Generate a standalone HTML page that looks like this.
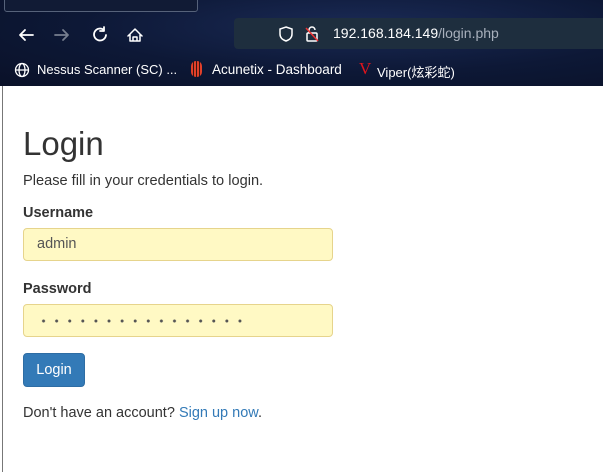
<!DOCTYPE html>
<html><head><style>
body{margin:0;width:603px;height:472px;overflow:hidden;background:#fff;font-family:"Liberation Sans","Noto Sans CJK SC",sans-serif;position:relative}
.top{position:absolute;left:0;top:0;width:603px;height:86px;background:radial-gradient(ellipse at 60% 30%,#1a2a55 0%,#0d1836 55%,#0a1128 100%)}
.tab{position:absolute;left:4px;top:-4px;width:192px;height:14px;border:1px solid #56627a;border-radius:3px;background:#111b35}
.url{position:absolute;left:234px;top:18px;width:380px;height:31px;background:#1e2e3e;border-radius:4px}
.t{position:absolute;color:#fff;white-space:nowrap}
.lb{position:absolute;left:2px;top:86px;width:1px;height:386px;background:#777}
.c{position:absolute;left:23px;color:#333;white-space:nowrap}
.in{position:absolute;left:23px;width:310px;height:33px;background:#fff9c4;border:1px solid #e6d48c;border-radius:4px;box-sizing:border-box}
</style></head><body>
<div class="top">
<div class="tab"></div>
<svg style="position:absolute;left:0;top:22px" width="160" height="26" fill="none" stroke-width="1.8" stroke-linecap="round" stroke-linejoin="round">
<path d="M20 13h13M20 13l5-5M20 13l5 5" stroke="#fff"/>
<path d="M55 13h13M68 13l-5-5M68 13l-5 5" stroke="#777f8f"/>
<path d="M104 8a6 6 0 1 0 2 5M104 5v4h-4" stroke="#fff"/>
<path d="M128 14l7-7 7 7M130 12v7h10v-7M133 19v-4h4v4" stroke="#fff" stroke-width="1.5"/>
</svg>
<div class="url"></div>
<svg style="position:absolute;left:276px;top:24px" width="50" height="20" fill="none" stroke="#fff" stroke-width="1.5">
<path d="M10 3l6 2v5c0 4-3 6-6 7-3-1-6-3-6-7V5z"/>
<rect x="31" y="9" width="10" height="8" rx="1"/><path d="M33 9V6a3 3 0 0 1 6 0"/><path d="M30 4l12 13" stroke="#e33"/>
</svg>
<div class="t" style="left:333px;top:25px;font-size:14px">192.168.184.149<span style="color:#a8b0bc">/login.php</span></div>
<svg style="position:absolute;left:14px;top:62px" width="16" height="16" fill="none" stroke="#fff" stroke-width="1.3"><circle cx="8" cy="8" r="6.5"/><ellipse cx="8" cy="8" rx="3" ry="6.5"/><path d="M1.5 8h13"/></svg>
<div class="t" style="left:37px;top:62px;font-size:13px">Nessus Scanner (SC) ...</div>
<div style="position:absolute;left:191px;top:61px;width:11px;height:16px;border-radius:5px;background:repeating-linear-gradient(90deg,#e2402a 0 2px,#3a1510 2px 3px)"></div>
<div class="t" style="left:212px;top:62px;font-size:13.5px">Acunetix - Dashboard</div>
<div class="t" style="left:359px;top:59px;font-size:17px;color:#e0141c;font-family:'Liberation Serif',serif">V</div>
<div class="t" style="left:377px;top:62px;font-size:13px">Viper(炫彩蛇)</div>
</div>
<div class="lb"></div>
<div class="c" style="top:125px;font-size:33px">Login</div>
<div class="c" style="top:173px;font-size:14.6px">Please fill in your credentials to login.</div>
<div class="c" style="top:205px;font-size:14.5px;font-weight:bold">Username</div>
<div class="in" style="top:228px"></div>
<div class="c" style="left:37px;top:236px;font-size:14.5px;color:#555">admin</div>
<div class="c" style="top:281px;font-size:14.5px;font-weight:bold">Password</div>
<div class="in" style="top:304px"></div>
<div style="position:absolute;left:36.5px;top:319px;width:209.6px;height:4px;background:radial-gradient(circle,#555 1.3px,transparent 1.7px) 0 0/13.1px 4px repeat-x"></div>
<div style="position:absolute;left:23px;top:353px;width:62px;height:34px;background:#337ab7;border:1px solid #2e6da4;border-radius:4px;box-sizing:border-box;color:#fff;font-size:14.5px;text-align:center;line-height:32px">Login</div>
<div class="c" style="top:405px;font-size:14.5px">Don't have an account? <span style="color:#337ab7">Sign up now</span>.</div>
</body></html>
